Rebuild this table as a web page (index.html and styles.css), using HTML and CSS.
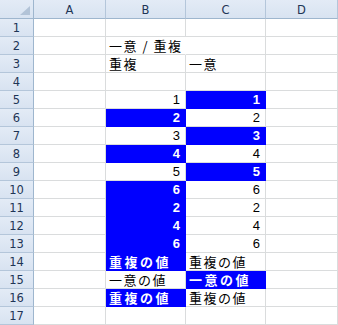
FILE: index.html
```html
<!DOCTYPE html>
<html lang="ja">
<head>
<meta charset="utf-8">
<link rel="stylesheet" href="styles.css">
</head>
<body>
<div class="sheet">
  <div class="hd corner"><svg class="tri" width="10" height="9" viewBox="0 0 10 9"><polygon points="10,0 10,9 0,9" fill="#b2c3d7"/></svg></div>
  <div class="hd col">A</div>
  <div class="hd col">B</div>
  <div class="hd col">C</div>
  <div class="hd col last">D</div>

  <div class="hd row">1</div><div class="c"></div><div class="c"></div><div class="c"></div><div class="c"></div>
  <div class="hd row">2</div><div class="c"></div><div class="c t over">一意 / 重複</div><div class="c"></div><div class="c"></div>
  <div class="hd row">3</div><div class="c"></div><div class="c t">重複</div><div class="c t">一意</div><div class="c"></div>
  <div class="hd row">4</div><div class="c"></div><div class="c"></div><div class="c"></div><div class="c"></div>
  <div class="hd row">5</div><div class="c"></div><div class="c n">1</div><div class="c n hi">1</div><div class="c"></div>
  <div class="hd row">6</div><div class="c"></div><div class="c n hi">2</div><div class="c n">2</div><div class="c"></div>
  <div class="hd row">7</div><div class="c"></div><div class="c n">3</div><div class="c n hi">3</div><div class="c"></div>
  <div class="hd row">8</div><div class="c"></div><div class="c n hi">4</div><div class="c n">4</div><div class="c"></div>
  <div class="hd row">9</div><div class="c"></div><div class="c n">5</div><div class="c n hi">5</div><div class="c"></div>
  <div class="hd row">10</div><div class="c"></div><div class="c n hi">6</div><div class="c n">6</div><div class="c"></div>
  <div class="hd row">11</div><div class="c"></div><div class="c n hi">2</div><div class="c n">2</div><div class="c"></div>
  <div class="hd row">12</div><div class="c"></div><div class="c n hi">4</div><div class="c n">4</div><div class="c"></div>
  <div class="hd row">13</div><div class="c"></div><div class="c n hi">6</div><div class="c n">6</div><div class="c"></div>
  <div class="hd row">14</div><div class="c"></div><div class="c t hi">重複の値</div><div class="c t">重複の値</div><div class="c"></div>
  <div class="hd row">15</div><div class="c"></div><div class="c t">一意の値</div><div class="c t hi">一意の値</div><div class="c"></div>
  <div class="hd row">16</div><div class="c"></div><div class="c t hi">重複の値</div><div class="c t">重複の値</div><div class="c"></div>
  <div class="hd row">17</div><div class="c"></div><div class="c"></div><div class="c"></div><div class="c"></div>
</div>
</body>
</html>
```

FILE: styles.css
```css
html, body {
  margin: 0;
  padding: 0;
  background: #ffffff;
}

.sheet {
  display: grid;
  grid-template-columns: 34px 72px 80px 80px 72px;
  grid-template-rows: 19px repeat(17, 18px);
  width: 338px;
  font-family: "Noto Sans CJK JP", "Noto Sans", sans-serif;
}

.hd {
  box-sizing: border-box;
  background: linear-gradient(#e3ebf6, #d8e3f1);
  color: #1e3556;
  font-family: "DejaVu Sans", "Noto Sans", sans-serif;
  font-size: 11.5px;
  display: flex;
  align-items: center;
  justify-content: center;
}

.corner {
  border-right: 1px solid #9eb6ce;
  border-bottom: 1px solid #9eb6ce;
  position: relative;
}

.tri {
  position: absolute;
  right: 3px;
  bottom: 3px;
}

.col {
  border-right: 1px solid #b4c6da;
  border-bottom: 1px solid #9eb6ce;
  padding-top: 1px;
}

.row {
  border-right: 1px solid #9eb6ce;
  border-bottom: 1px solid #b4c6da;
  padding-top: 1px;
}

.c {
  box-sizing: border-box;
  border-right: 1px solid #dadcdd;
  border-bottom: 1px solid #dadcdd;
  font-size: 13px;
  line-height: 15px;
  color: #000;
  display: flex;
  align-items: flex-end;
  padding: 0 3px 1px 3px;
  white-space: nowrap;
}

.t {
  letter-spacing: 1.5px;
}

.t.hi {
  letter-spacing: 2.5px;
}

.over {
  overflow: visible;
  border-right-color: transparent;
}

.n {
  justify-content: flex-end;
  padding-right: 5px;
  font-family: "Liberation Sans", "Noto Sans", sans-serif;
  font-size: 13px;
}

.hi {
  background: #0000ff;
  color: #ffffff;
  font-weight: bold;
  border-right-color: #0000ff;
  border-bottom-color: #0000ff;
}
```
